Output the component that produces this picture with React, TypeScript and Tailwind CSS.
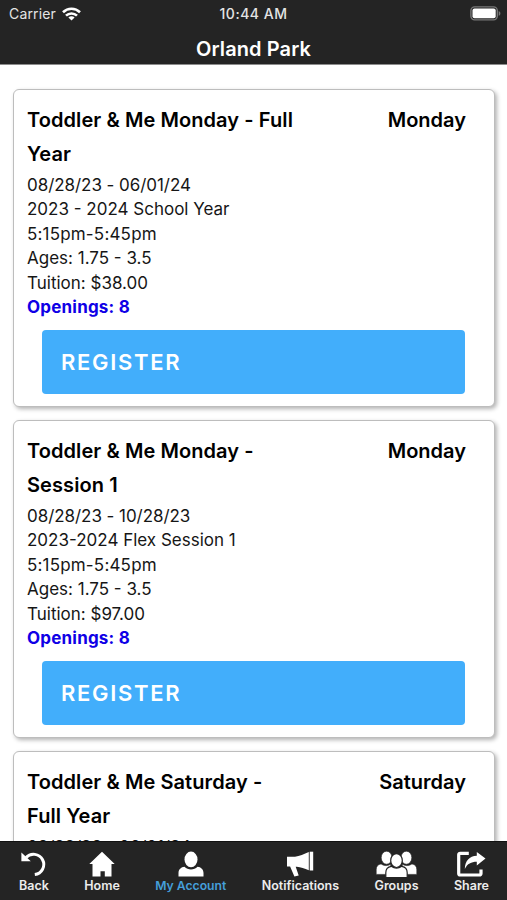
import type { ReactNode } from "react";

type ClassInfo = {
    title: string[];
    day: string;
    dates: string;
    session?: string;
    time?: string;
    ages?: string;
    tuition?: string;
    openings?: number;
};

const classes: ClassInfo[] = [
    {
        title: ["Toddler & Me Monday - Full", "Year"],
        day: "Monday",
        dates: "08/28/23 - 06/01/24",
        session: "2023 - 2024 School Year",
        time: "5:15pm-5:45pm",
        ages: "1.75 - 3.5",
        tuition: "$38.00",
        openings: 8,
    },
    {
        title: ["Toddler & Me Monday -", "Session 1"],
        day: "Monday",
        dates: "08/28/23 - 10/28/23",
        session: "2023-2024 Flex Session 1",
        time: "5:15pm-5:45pm",
        ages: "1.75 - 3.5",
        tuition: "$97.00",
        openings: 8,
    },
    {
        title: ["Toddler & Me Saturday -", "Full Year"],
        day: "Saturday",
        dates: "08/28/23 - 06/01/24",
    },
];

function StatusBar() {
    return (
        <div className="grid h-7 grid-cols-3 items-center pl-[9px] pr-[6px] text-[14px] leading-7 text-[#e4e4e4]">
            <div className="flex items-center gap-[6px]">
                <span className="tracking-[0.15px]">Carrier</span>
                <svg className="-mt-px" width="19" height="14" viewBox="0 0 19 14" fill="none" stroke="#fff" strokeWidth="2.6">
                    <path d="M1 5.2a12.2 12.2 0 0 1 17 0" />
                    <path d="M4 8.7a7.8 7.8 0 0 1 11 0" />
                    <path d="M9.5 13.6 6.4 10.5a4.4 4.4 0 0 1 6.2 0Z" fill="#fff" stroke="none" />
                </svg>
            </div>
            <span className="whitespace-nowrap pr-[3px] text-center font-medium tracking-[0.5px]">10:44 AM</span>
            <svg className="-mt-[2px] justify-self-end" width="31" height="15" viewBox="0 0 31 15">
                <rect x="0.9" y="0.9" width="26.4" height="13" rx="3.8" fill="none" stroke="#777" strokeWidth="1.4" />
                <rect x="2.5" y="2.5" width="23.2" height="9.8" rx="2" fill="#fff" />
                <path d="M28.7 5v4.8c1-.4 1.7-1.3 1.7-2.4s-.7-2-1.7-2.4Z" fill="#777" />
            </svg>
        </div>
    );
}

function ClassCard({ item }: { item: ClassInfo }) {
    return (
        <article className="h-[318px] shrink-0 rounded-[6px] border border-[#bdbdbd] bg-white px-[13px] pt-[13px] shadow-[2px_2px_4px_rgba(0,0,0,0.3)]">
            <div className="flex justify-between pr-[15px] text-[20px] font-semibold leading-[34px] text-black">
                <h2 className="tracking-[0.08px]">
                    {item.title[0]}
                    <br />
                    {item.title[1]}
                </h2>
                <span>{item.day}</span>
            </div>
            <div className="pt-[2px] text-[17px] leading-[24.4px] text-[#161616]">
                <p className="tracking-[-0.05px]">{item.dates}</p>
                {item.session && <p>{item.session}</p>}
                {item.time && <p className="tracking-[0.18px]">{item.time}</p>}
                {item.ages && <p>Ages: {item.ages}</p>}
                {item.tuition && <p>Tuition: {item.tuition}</p>}
                {item.openings && <p className="font-bold tracking-[0.2px] text-[#0f00e6]">Openings: {item.openings}</p>}
            </div>
            {item.openings && (
                <button className="ml-[15px] mt-[11px] block h-[64px] w-[423px] rounded-[4px] bg-[#42aefb] pl-[19px] text-left text-[22px] font-semibold tracking-[1.7px] text-white">
                    REGISTER
                </button>
            )}
        </article>
    );
}

function Tab({ label, active, children }: { label: string; active?: boolean; children: ReactNode }) {
    return (
        <div className="flex flex-col items-center text-white">
            <div className="flex h-[27px] items-center">{children}</div>
            <span className={active ? "text-[12.2px] font-semibold leading-[18px] text-[#459fda]" : "text-[12.5px] font-semibold leading-[18px] text-[#ececec]"}>
                {label}
            </span>
        </div>
    );
}

function TabBar() {
    return (
        <nav className="flex h-[59px] shrink-0 justify-between border-t border-[#111] bg-[#242424] pl-[19px] pr-[18px] pt-[8px]">
            <Tab label="Back">
                <svg width="26" height="26" viewBox="0 0 26 26">
                    <path d="M5 6.600A10.200 10.200 0 1 1 13.800 23.600" fill="none" stroke="currentColor" strokeWidth="3" />
                    <path d="M.4 1.400 9.800 10.200H.4Z" fill="currentColor" />
                </svg>
            </Tab>
            <Tab label="Home">
                <svg width="26" height="26" viewBox="0 0 26 26" fill="currentColor">
                    <path d="M13 .8 25.700 13h-3.200v12.600h-6.700v-5.400h-4.300v5.400H3.500V13H.3Z" />
                </svg>
            </Tab>
            <Tab label="My Account" active>
                <svg width="26" height="26" viewBox="0 0 26 26" fill="currentColor">
                    <ellipse cx="13" cy="8.400" rx="6.500" ry="7.800" />
                    <path d="M.5 25.600v-3.500c0-3.600 2.500-6.100 6-6.300 1.800 1.700 4 2.600 6.500 2.600s4.700-.9 6.500-2.600c3.500.2 6 2.700 6 6.300v3.500Z" />
                </svg>
            </Tab>
            <Tab label="Notifications">
                <svg width="28" height="26" viewBox="0 0 28 26" fill="currentColor">
                    <path d="M1 5.800h8C13.500 5 18 3.300 22.800 1v18.200c-4.300-1.700-8-2.900-12-3.500H9.700l3 8.800-4.300 1.100-4.300-10.200H1Z" />
                    <path d="M23.700.7h3.500v18.800h-3.500Z" />
                </svg>
            </Tab>
            <Tab label="Groups">
                <svg width="41" height="26" viewBox="0 0 41 26" fill="currentColor" stroke="#242424">
                    <g strokeWidth="0.6">
                        <ellipse cx="10.600" cy="6.700" rx="5.400" ry="6.500" />
                        <ellipse cx="30.400" cy="6.700" rx="5.400" ry="6.500" />
                        <path d="M.2 23.400v-4.700c0-3.400 1.800-5.400 4.900-5.800 3.300 2.200 6.300 2.200 9.600.3v10.200Z" />
                        <path d="M40.800 23.400v-4.700c0-3.400-1.800-5.400-4.900-5.800-3.300 2.200-6.300 2.200-9.600.3v10.200Z" />
                    </g>
                    <path d="M9.800 26.500v-4.700c0-3.700 2-6 5.400-6.500 3.300 2.200 7.300 2.200 10.600 0 3.400.5 5.400 2.800 5.400 6.500v4.700Z" strokeWidth="1.200" />
                    <ellipse cx="20.500" cy="9.600" rx="5.800" ry="6.900" strokeWidth="1.200" />
                </svg>
            </Tab>
            <Tab label="Share">
                <svg width="30" height="26" viewBox="0 0 30 26">
                    <path d="M12.800 2.300H4.200a1.500 1.500 0 0 0-1.500 1.500v18.700a1.500 1.500 0 0 0 1.500 1.500h19.300a1.500 1.500 0 0 0 1.500-1.500v-4" fill="none" stroke="currentColor" strokeWidth="3.200" />
                    <path d="m20.800 1 8.700 6.600-8.700 6.800V10.800c-5.700.1-9.300 1.900-12 7.200.3-8.200 4.500-12.800 12-13.200Z" fill="currentColor" />
                </svg>
            </Tab>
        </nav>
    );
}

export default function App() {
    return (
        <div className="flex h-[900px] w-[507px] flex-col overflow-hidden bg-white font-['Inter',sans-serif]">
            <header className="h-[65px] shrink-0 border-b border-[#8c8c8c] bg-[#242424]">
                <StatusBar />
                <h1 className="pt-[6px] text-center text-[20px] font-semibold leading-[30px] tracking-[0.1px] text-white">Orland Park</h1>
            </header>
            <main className="flex min-h-0 flex-1 flex-col gap-[13px] overflow-hidden pl-[13px] pr-[12px] pt-[24px]">
                {classes.map((item) => (
                    <ClassCard key={item.title.join(" ")} item={item} />
                ))}
            </main>
            <TabBar />
        </div>
    );
}
